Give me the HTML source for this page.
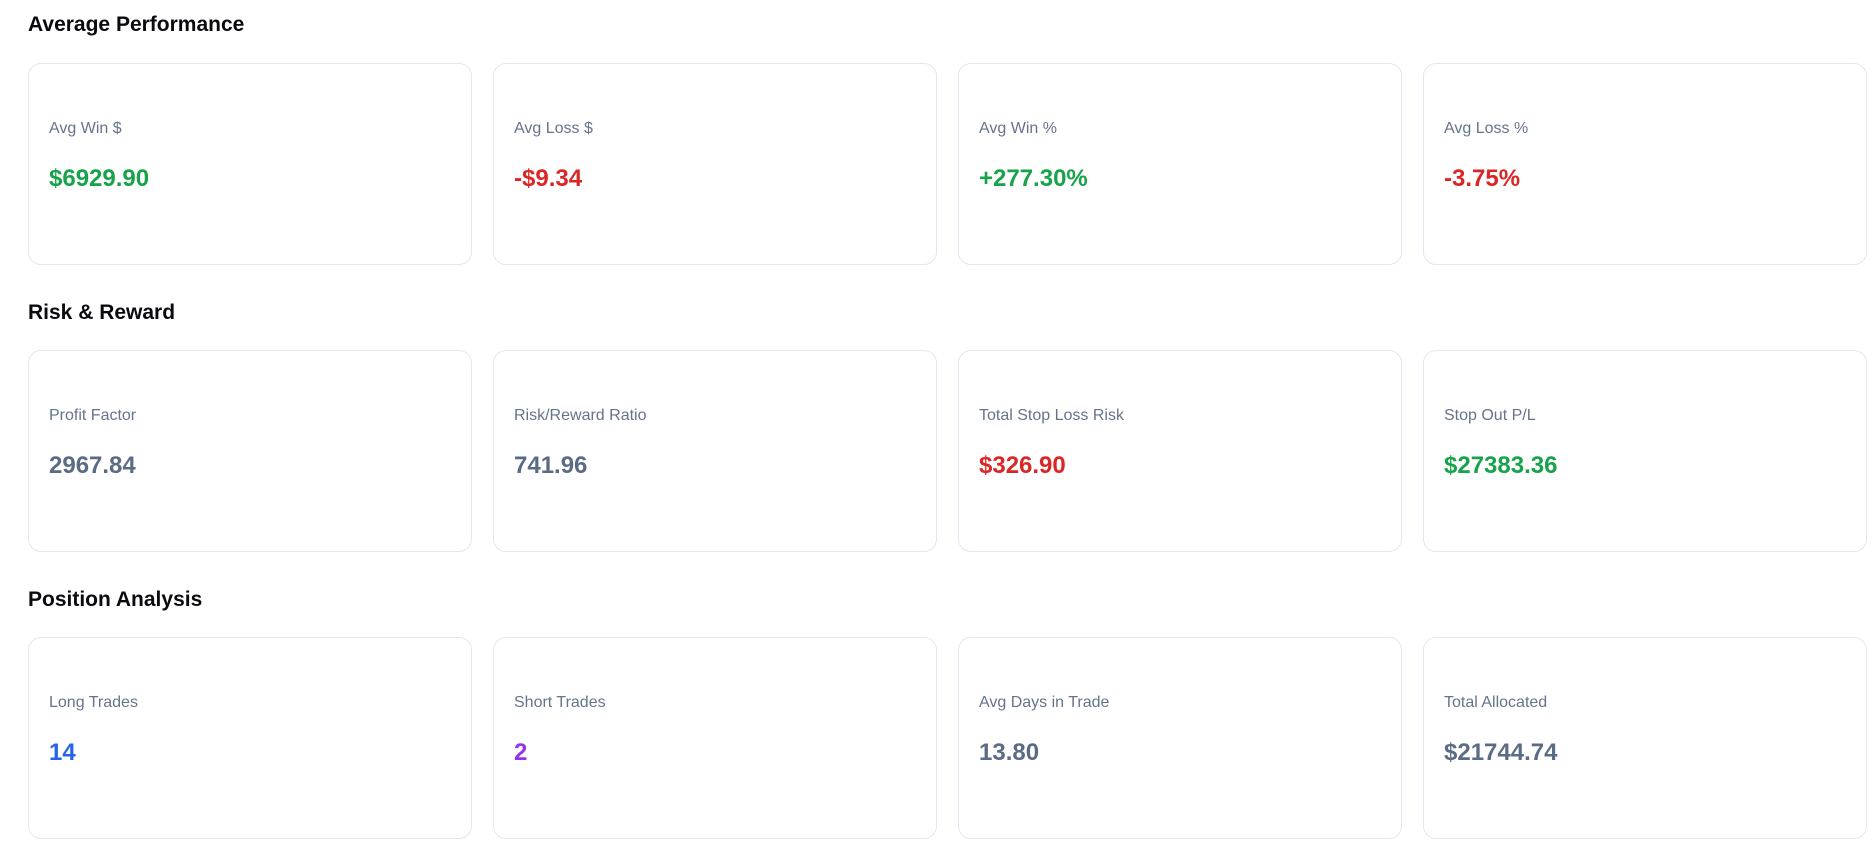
<!DOCTYPE html>
<html><head><style>
body{margin:0;background:#fff;font-family:"Liberation Sans",sans-serif;width:1873px;height:846px;overflow:hidden;position:relative}
h2{position:absolute;left:28px;margin:0;font-size:21px;font-weight:600;color:#0b0b0f;line-height:26px}
.card{position:absolute;width:442px;height:200px;border:1px solid #e2e8f0;border-radius:13px;box-sizing:content-box}
.l{position:absolute;left:20px;top:54px;font-size:16px;color:#64748b;line-height:22px}
.v{position:absolute;left:20px;top:100px;font-size:24px;font-weight:600;line-height:30px;color:#5b6b84}
.g{color:#16a34a}.r{color:#dc2626}.b{color:#2563eb}.p{color:#9333ea}
</style></head><body>
<h2 style="top:12px">Average Performance</h2>
<div class="card" style="left:28px;top:63px"><div class="l">Avg Win $</div><div class="v g">$6929.90</div></div>
<div class="card" style="left:493px;top:63px"><div class="l">Avg Loss $</div><div class="v r">-$9.34</div></div>
<div class="card" style="left:958px;top:63px"><div class="l">Avg Win %</div><div class="v g">+277.30%</div></div>
<div class="card" style="left:1423px;top:63px"><div class="l">Avg Loss %</div><div class="v r">-3.75%</div></div>
<h2 style="top:300px">Risk &amp; Reward</h2>
<div class="card" style="left:28px;top:350px"><div class="l">Profit Factor</div><div class="v">2967.84</div></div>
<div class="card" style="left:493px;top:350px"><div class="l">Risk/Reward Ratio</div><div class="v">741.96</div></div>
<div class="card" style="left:958px;top:350px"><div class="l">Total Stop Loss Risk</div><div class="v r">$326.90</div></div>
<div class="card" style="left:1423px;top:350px"><div class="l">Stop Out P/L</div><div class="v g">$27383.36</div></div>
<h2 style="top:587px">Position Analysis</h2>
<div class="card" style="left:28px;top:637px"><div class="l">Long Trades</div><div class="v b">14</div></div>
<div class="card" style="left:493px;top:637px"><div class="l">Short Trades</div><div class="v p">2</div></div>
<div class="card" style="left:958px;top:637px"><div class="l">Avg Days in Trade</div><div class="v">13.80</div></div>
<div class="card" style="left:1423px;top:637px"><div class="l">Total Allocated</div><div class="v">$21744.74</div></div>
</body></html>
